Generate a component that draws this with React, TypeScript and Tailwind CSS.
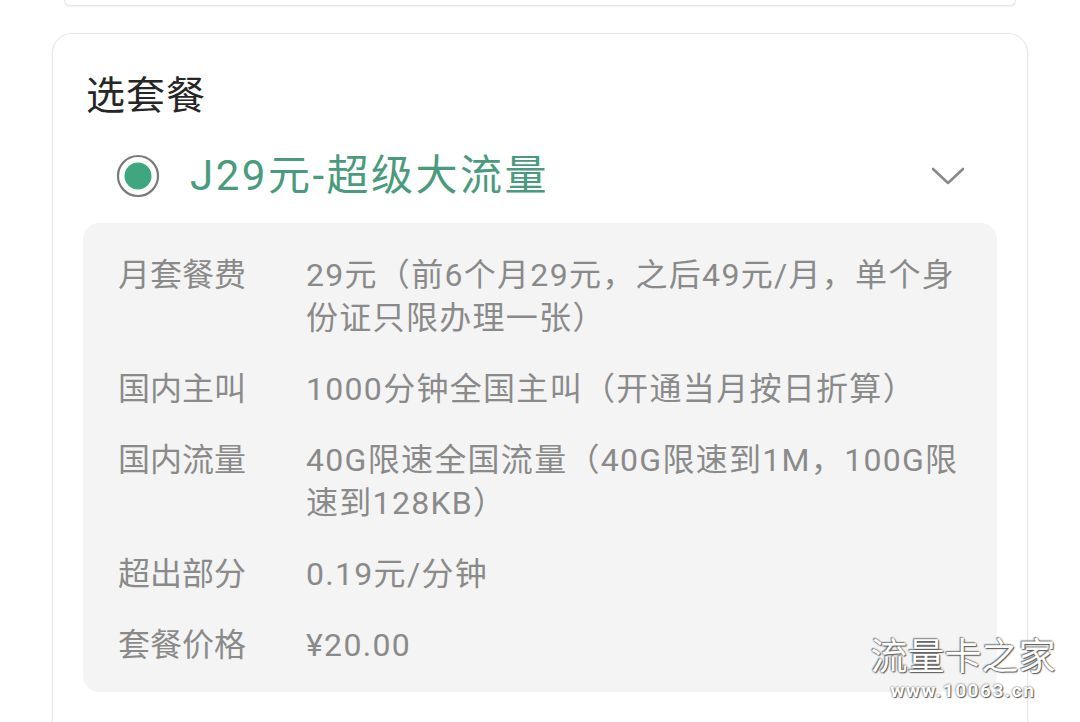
const ROWS: { label: string; value: string }[] = [
  { label: "月套餐费", value: "29元（前6个月29元，之后49元/月，单个身份证只限办理一张）" },
  { label: "国内主叫", value: "1000分钟全国主叫（开通当月按日折算）" },
  { label: "国内流量", value: "40G限速全国流量（40G限速到1M，100G限速到128KB）" },
  { label: "超出部分", value: "0.19元/分钟" },
  { label: "套餐价格", value: "¥20.00" },
];

const FONT = "font-['Roboto','Noto_Sans_CJK_SC',sans-serif]";

export default function App() {
  return (
    <div className={`relative h-[722px] w-[1080px] overflow-hidden bg-white ${FONT}`}>
      {/* tail of the card above */}
      <div className="ml-[64px] h-[6px] w-[952px] rounded-b-[14px] border-x border-b border-[#e4e4e4] shadow-[0_1px_2px_rgba(0,0,0,0.05)]" />

      {/* plan card */}
      <div className="ml-[52px] mt-[27px] h-[740px] w-[976px] rounded-[20px] border-[1.5px] border-[#e6e6e6] bg-white px-[30px] pt-[38px] shadow-[0_1px_4px_rgba(0,0,0,0.04)]">
        <h2 className="ml-[3px] text-[39px] leading-[48px] tracking-[1px] text-[#262626]">选套餐</h2>

        <div className="mt-[28px] flex h-[56px] items-center pl-[33px] pr-[32px]">
          <svg viewBox="0 0 44 44" className="h-[44px] w-[44px] shrink-0">
            <circle cx="22" cy="22" r="20" fill="none" stroke="#7a7a7a" strokeWidth="2.2" />
            <circle cx="22" cy="22" r="13.5" fill="#3fa67f" />
          </svg>
          <span className="ml-[30px] text-[42px] leading-[56px] tracking-[2.5px] text-[#4a9b7d]">
            J29元-超级大流量
          </span>
          <svg viewBox="0 0 34 18" className="ml-auto h-[18px] w-[34px]" fill="none" stroke="#8a8a8a" strokeWidth="2.6" strokeLinecap="round" strokeLinejoin="round">
            <polyline points="2,2 17,16 32,2" />
          </svg>
        </div>

        {/* details panel */}
        <div className="mt-[19px] flex flex-col gap-[28px] rounded-[16px] bg-[#f4f4f4] pb-[25px] pl-[35px] pr-[32px] pt-[31px]">
          {ROWS.map((r) => (
            <div key={r.label} className="flex text-[32px] leading-[43px] text-[#8a8a8a]">
              <div className="w-[188px] shrink-0">{r.label}</div>
              <div className="min-w-0 flex-1 tracking-[1.3px]">{r.value}</div>
            </div>
          ))}
        </div>
      </div>

      {/* watermark */}
      <div className="absolute left-[870px] top-[636px] flex w-[186px] flex-col items-center text-white">
        <span className="text-[37px] leading-[44px] [text-shadow:0_0_2px_#444,1px_1px_1px_#666,-1px_-1px_1px_#999]">流量卡之家</span>
        <span className="text-[19px] font-bold leading-[22px] tracking-[1.5px] [text-shadow:0_0_2px_#444,1px_1px_1px_#666]">
          www.10063.cn
        </span>
      </div>
    </div>
  );
}
